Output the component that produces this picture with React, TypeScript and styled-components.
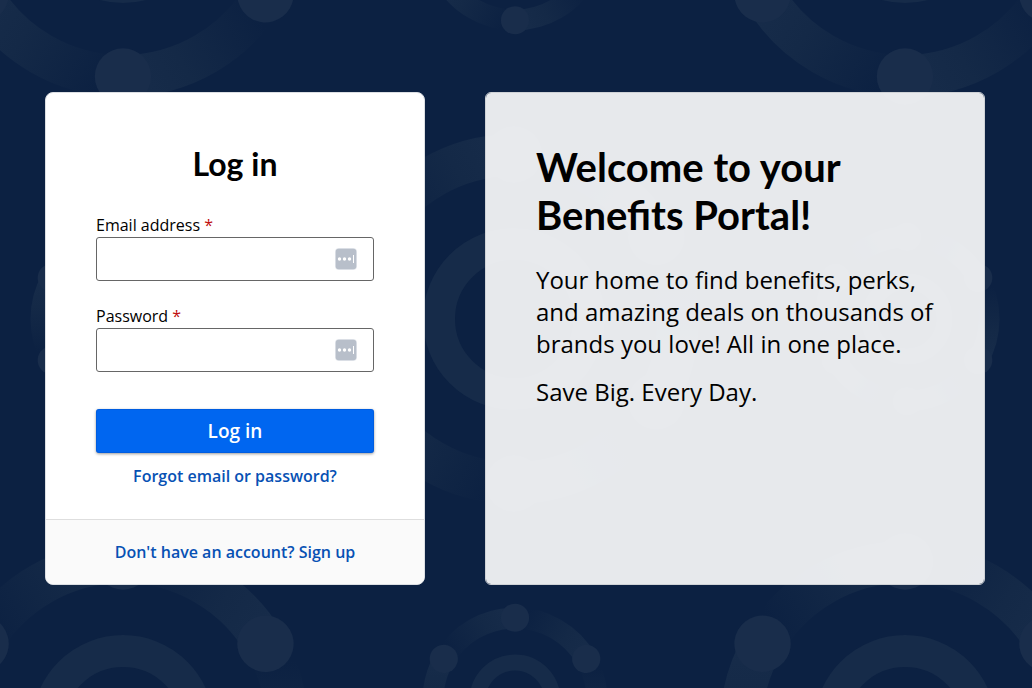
import React from "react";
import styled, { createGlobalStyle } from "styled-components";

const GlobalStyle = createGlobalStyle`
  *, *::before, *::after { box-sizing: border-box; }
  body {
    margin: 0;
    background: #0c2142;
    color: #000;
    font-family: "Open Sans", "Liberation Sans", sans-serif;
    font-size: 16px;
    line-height: 24px;
  }
`;

const Page = styled.div`
  position: relative;
  min-height: 100vh;
  overflow: hidden;
  padding: 92px 47px 92px 45px;
`;

const Backdrop = styled.svg`
  position: absolute;
  inset: 0;
  width: 100%;
  height: 100%;
`;

const Columns = styled.main`
  position: relative;
  display: flex;
  justify-content: center;
  align-items: stretch;
  gap: 60px;
`;

const LoginCard = styled.section`
  display: flex;
  flex-direction: column;
  flex: 0 1 380px;
  border: 1px solid #dcdfe3;
  border-radius: 8px;
  background: #fff;
  overflow: hidden;
`;

const LoginForm = styled.form`
  display: flex;
  flex-direction: column;
  padding: 50px 50px 31px;
`;

const LoginTitle = styled.h2`
  margin: 0 0 28px;
  font-family: Lato, "Open Sans", sans-serif;
  font-size: 32px;
  line-height: 42px;
  font-weight: 700;
  text-align: center;
`;

const Field = styled.div`
  display: flex;
  flex-direction: column;
  & + & { margin-top: 23px; }
`;

const Label = styled.label`
  display: block;
`;

const Required = styled.span`
  color: #c00d0d;
`;

const InputWrap = styled.div`
  position: relative;
  display: flex;
`;

const Input = styled.input`
  width: 100%;
  height: 44px;
  padding: 0 44px 0 12px;
  border: 1px solid #666;
  border-radius: 3px;
  background: #fff;
  font: inherit;
`;

const FillIcon = styled.svg`
  position: absolute;
  top: 10px;
  right: 16px;
  width: 24px;
  height: 24px;
`;

const SubmitButton = styled.button`
  height: 44px;
  margin-top: 37px;
  padding: 0;
  border: 0;
  border-radius: 3px;
  background: #0066f0;
  box-shadow: inset 0 0 0 1px rgba(0, 60, 160, 0.2), 0 1px 3px rgba(0, 0, 0, 0.4);
  color: #fff;
  font: inherit;
  font-size: 19px;
  font-weight: 600;
  cursor: pointer;
`;

const TextLink = styled.a`
  color: #0751b4;
  font-weight: 600;
  text-decoration: none;
`;

const ForgotRow = styled.div`
  margin-top: 11px;
  text-align: center;
`;

const CardFooter = styled.div`
  margin-top: auto;
  padding: 20px;
  border-top: 1px solid #dedede;
  background: #fafafa;
  text-align: center;
`;

const WelcomeCard = styled.section`
  flex: 0 1 500px;
  padding: 50px;
  border: 1px solid #cfd2d6;
  border-radius: 6px;
  background: rgba(255, 255, 255, 0.9);
  background-clip: padding-box;
`;

const WelcomeTitle = styled.h1`
  margin: 0 0 25px;
  font-family: Lato, "Open Sans", sans-serif;
  font-size: 40px;
  line-height: 48px;
  font-weight: 700;
`;

const Lead = styled.p`
  margin: 0;
  font-size: 24px;
  line-height: 32px;
  & + & { margin-top: 16px; }
`;

const STEPS = [0, 60, 120, 180, 240, 300];

const ROSETTES = [
  { x: 123, y: -88, scale: 1 },
  { x: 905, y: -88, scale: 1 },
  { x: 514, y: 319, scale: 1 },
  { x: 123, y: 726, scale: 1 },
  { x: 905, y: 726, scale: 1 },
  { x: 515, y: -62, scale: 0.5 },
  { x: 123, y: 319, scale: 0.5 },
  { x: 907, y: 319, scale: 0.5 },
  { x: 515, y: 700, scale: 0.5 },
];

/* Each arc runs from one satellite to the next and fades on the way. */
function Pattern() {
  return (
    <Backdrop viewBox="0 0 1032 688" preserveAspectRatio="xMidYMid slice" aria-hidden="true">
      <defs>
        <linearGradient id="fade" gradientUnits="userSpaceOnUse" x1="0" y1="164" x2="142" y2="82">
          <stop offset="0" stopColor="#172c4a" />
          <stop offset="0.35" stopColor="#142947" />
          <stop offset="0.9" stopColor="#0c2142" />
        </linearGradient>
        <g id="rosette">
          {STEPS.map((a) => (
            <path
              key={a}
              d="M0 164A164 164 0 0 0 142 82"
              transform={`rotate(${a})`}
              fill="none"
              stroke="url(#fade)"
              strokeWidth="42"
            />
          ))}
          {STEPS.map((a) => (
            <circle key={a} cx="0" cy="164.5" r="28.2" transform={`rotate(${a})`} fill="#192d4b" />
          ))}
          <circle r="75" fill="none" stroke="#162b49" strokeWidth="32" />
        </g>
      </defs>
      {ROSETTES.map((r) => (
        <use
          key={`${r.x},${r.y}`}
          href="#rosette"
          transform={`translate(${r.x} ${r.y}) scale(${r.scale})`}
        />
      ))}
    </Backdrop>
  );
}

function PasswordFillIcon() {
  return (
    <FillIcon viewBox="0 0 24 24" aria-hidden="true">
      <rect x="1" y="1" width="22" height="22" rx="4" fill="#e6e9ee" />
      <rect x="1.7" y="1.7" width="20.6" height="20.6" rx="3" fill="#b8bfca" />
      <circle cx="5.5" cy="12" r="1.7" fill="#fff" />
      <circle cx="10.5" cy="12" r="1.7" fill="#fff" />
      <circle cx="15.5" cy="12" r="1.7" fill="#fff" />
      <rect x="19" y="8" width="1" height="8" fill="#fff" />
    </FillIcon>
  );
}

function FormField({ id, label, type }: { id: string; label: string; type: string }) {
  return (
    <Field>
      <Label htmlFor={id}>
        {label} <Required>*</Required>
      </Label>
      <InputWrap>
        <Input id={id} name={id} type={type} required />
        <PasswordFillIcon />
      </InputWrap>
    </Field>
  );
}

export default function App() {
  return (
    <>
      <GlobalStyle />
      <Page>
        <Pattern />
        <Columns>
          <LoginCard>
            <LoginForm onSubmit={(e) => e.preventDefault()}>
              <LoginTitle>Log in</LoginTitle>
              <FormField id="email" label="Email address" type="email" />
              <FormField id="password" label="Password" type="password" />
              <SubmitButton type="submit">Log in</SubmitButton>
              <ForgotRow>
                <TextLink href="#forgot">Forgot email or password?</TextLink>
              </ForgotRow>
            </LoginForm>
            <CardFooter>
              <TextLink href="#signup">Don't have an account? Sign up</TextLink>
            </CardFooter>
          </LoginCard>
          <WelcomeCard>
            <WelcomeTitle>Welcome to your Benefits Portal!</WelcomeTitle>
            <Lead>
              Your home to find benefits, perks, and amazing deals on thousands of brands you love!
              All in one place.
            </Lead>
            <Lead>Save Big. Every Day.</Lead>
          </WelcomeCard>
        </Columns>
      </Page>
    </>
  );
}
